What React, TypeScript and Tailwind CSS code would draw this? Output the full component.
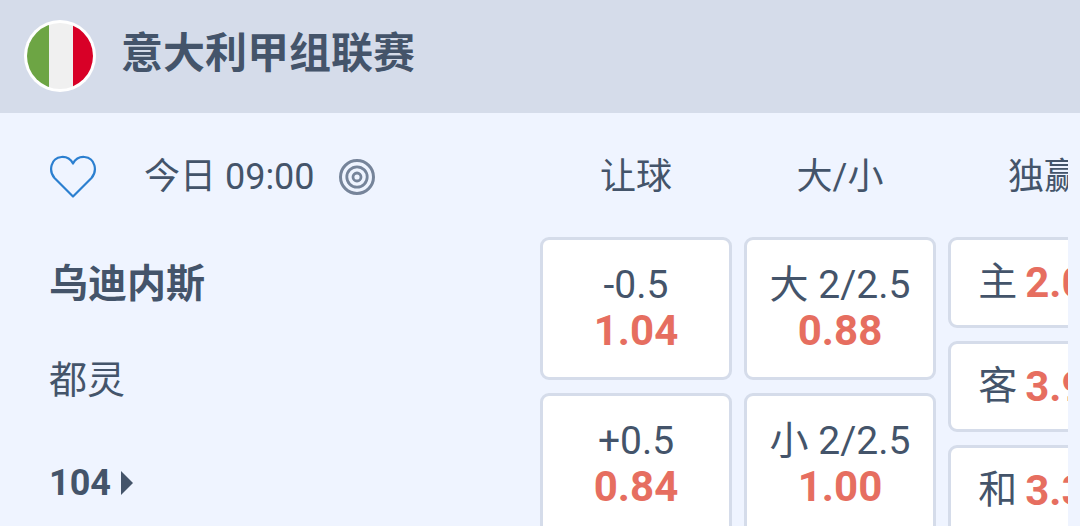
function Flag() {
  return (
    <svg width="72" height="72" viewBox="0 0 72 72" className="mb-[2px] shrink-0">
      <defs>
        <clipPath id="flagClip">
          <circle cx="36" cy="36" r="33" />
        </clipPath>
      </defs>
      <circle cx="36" cy="36" r="36" fill="#ffffff" />
      <g clipPath="url(#flagClip)">
        <rect x="0" y="0" width="25" height="72" fill="#6da544" />
        <rect x="25" y="0" width="24" height="72" fill="#f0f0f0" />
        <rect x="49" y="0" width="23" height="72" fill="#d80027" />
      </g>
    </svg>
  );
}

function Heart() {
  return (
    <svg width="48" height="44" viewBox="0 0 48 44" fill="none" className="shrink-0">
      <path
        d="M24 41.5 L5.5 23 C-0.5 16 1.5 3 12.5 2 C17.5 1.6 21.5 4 24 8.5 C26.5 4 30.5 1.6 35.5 2 C46.5 3 48.5 16 42.5 23 Z"
        stroke="#2b7fd0"
        strokeWidth="2.2"
        strokeLinejoin="round"
      />
    </svg>
  );
}

function Target() {
  return (
    <svg width="38" height="38" viewBox="0 0 38 38" fill="none" className="shrink-0">
      <circle cx="19" cy="19" r="16.5" stroke="#76849a" strokeWidth="3" />
      <circle cx="19" cy="19" r="10.2" stroke="#76849a" strokeWidth="2.8" />
      <circle cx="19" cy="19" r="4" stroke="#76849a" strokeWidth="2.8" />
    </svg>
  );
}

function OddsCard({ label, odds }: { label: string; odds: string }) {
  return (
    <div className="flex h-[143px] w-[192px] flex-col items-center justify-center rounded-[9px] border-[3px] border-[#d5dcea] bg-white pb-[1px] leading-none">
      <span className="text-[39px] leading-[46px]">{label}</span>
      <span className="text-[42px] leading-[46px] font-bold text-[#e66e60]">{odds}</span>
    </div>
  );
}

function WinCard({ label, odds }: { label: string; odds: string }) {
  return (
    <div className="flex h-[91px] w-[192px] shrink-0 items-center justify-center gap-[8px] rounded-[9px] border-[3px] border-[#d5dcea] bg-white">
      <span className="text-[39px]">{label}</span>
      <span className="text-[42px] font-bold text-[#e66e60]">{odds}</span>
    </div>
  );
}

export default function App() {
  return (
    <div className="h-[526px] w-[1080px] overflow-hidden bg-[#eff4ff] font-['Roboto','Noto_Sans_CJK_SC',sans-serif] text-[#44546a]">
      <header className="flex h-[113px] items-center gap-[25px] bg-[#d5dcea] pl-[24px]">
        <Flag />
        <h1 className="pb-[7px] text-[42px] font-bold">意大利甲组联赛</h1>
      </header>

      <div className="flex pl-[49px]">
        <div className="w-[491px] shrink-0">
          <div className="flex h-[124px] items-center pt-[4px]">
            <Heart />
            <span className="ml-[47px] text-[36px]">今日 09:00</span>
            <span className="ml-[23px]">
              <Target />
            </span>
          </div>
          <div className="flex h-[94px] items-center text-[39px] font-bold">乌迪内斯</div>
          <div className="flex h-[98px] items-center text-[38px]">都灵</div>
          <div className="flex h-[106px] items-center gap-[9px] pt-[2px] text-[36px] font-bold">
            104
            <svg width="14" height="26" viewBox="0 0 14 26" className="shrink-0">
              <path d="M1 1 L13 13 L1 25 Z" fill="#44546a" />
            </svg>
          </div>
        </div>

        <div className="w-[528px] shrink-0 overflow-hidden">
          <div className="flex gap-[12px]">
            <div className="flex w-[192px] shrink-0 flex-col">
              <div className="flex h-[124px] items-center justify-center pt-[4px] text-[36px]">让球</div>
              <div className="flex flex-col gap-[13px]">
                <OddsCard label="-0.5" odds="1.04" />
                <OddsCard label="+0.5" odds="0.84" />
              </div>
            </div>
            <div className="flex w-[192px] shrink-0 flex-col">
              <div className="flex h-[124px] items-center justify-center pt-[4px] text-[36px]">大/小</div>
              <div className="flex flex-col gap-[13px]">
                <OddsCard label="大 2/2.5" odds="0.88" />
                <OddsCard label="小 2/2.5" odds="1.00" />
              </div>
            </div>
            <div className="flex w-[192px] shrink-0 flex-col">
              <div className="flex h-[124px] items-center justify-center pt-[4px] text-[36px]">独赢</div>
              <div className="flex flex-col gap-[13px]">
                <WinCard label="主" odds="2.05" />
                <WinCard label="客" odds="3.90" />
                <WinCard label="和" odds="3.30" />
              </div>
            </div>
          </div>
        </div>
      </div>
    </div>
  );
}
